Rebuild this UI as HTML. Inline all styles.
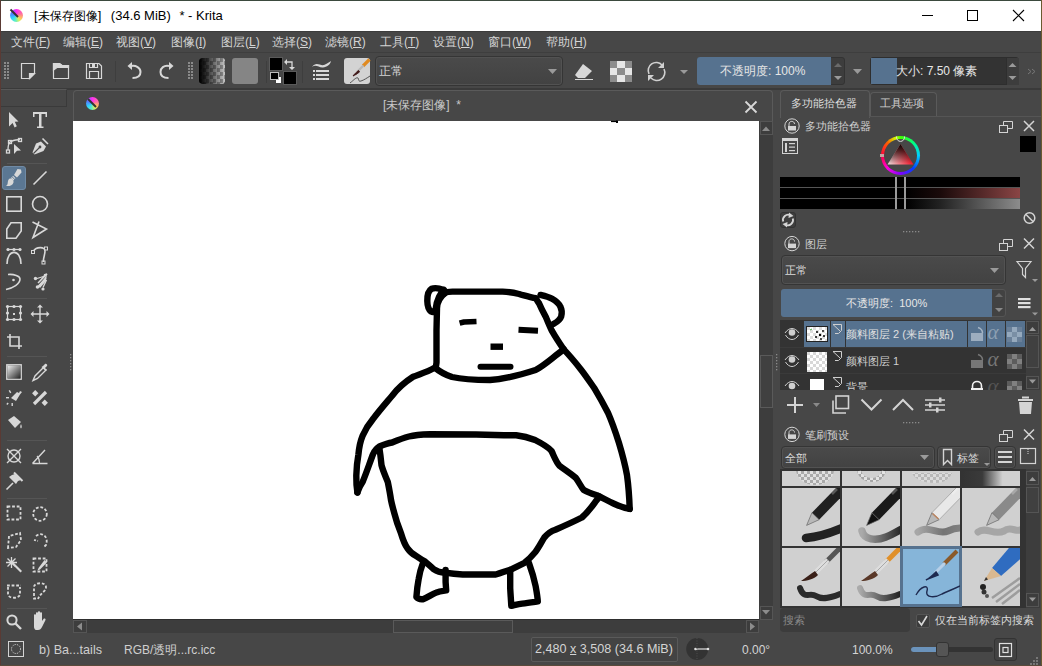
<!DOCTYPE html>
<html><head><meta charset="utf-8">
<style>
*{margin:0;padding:0;box-sizing:border-box}
html,body{width:1042px;height:666px;overflow:hidden}
body{position:relative;background:#474747;font-family:"Liberation Sans",sans-serif;font-size:12px;color:#d4d4d4}
.a{position:absolute}
.t{position:absolute;white-space:nowrap;line-height:14px}
svg{position:absolute;left:0;top:0;overflow:visible}
</style></head><body>
<!-- desktop border -->
<div class="a" style="left:0;top:0;width:1042px;height:1px;background:#3b4a3e"></div>
<div class="a" style="left:0;top:0;width:1px;height:666px;background:#5a3a34"></div>
<div class="a" style="left:1041px;top:0;width:1px;height:666px;background:#6a5a30"></div>
<div class="a" style="left:0;top:665px;width:1042px;height:1px;background:#5a4a3a"></div>
<!-- title bar -->
<div class="a" style="left:1px;top:1px;width:1040px;height:30px;background:#fff"></div>
<div class="t" style="left:34px;top:8px;font-size:13px;color:#000;line-height:15px">[<span style="font-size:12.2px">未保存图像</span>]&nbsp;<span style="display:inline-block;width:6px"></span>(34.6 MiB)&nbsp;<span style="display:inline-block;width:5px"></span>* - Krita</div>
<div class="a" style="left:10px;top:9px;width:13px;height:13px;border-radius:50%;background:conic-gradient(#ff30f0 0deg,#ff70a0 70deg,#ffc060 120deg,#e0f060 150deg,#60f0c0 190deg,#30d0ff 240deg,#5080ff 290deg,#c040ff 330deg,#ff30f0 360deg)"></div>
<svg width="1042" height="666">
<line x1="922" y1="15.5" x2="933" y2="15.5" stroke="#000" stroke-width="1"/>
<rect x="967.5" y="10.5" width="10" height="10" fill="none" stroke="#000" stroke-width="1"/>
<path d="M1013 10 L1024 21 M1024 10 L1013 21" stroke="#000" stroke-width="1.1"/>
<path d="M10.5 9.5 L18 17" stroke="#333" stroke-width="2"/>
</svg>
<!-- menu bar -->
<div class="a" style="left:1px;top:31px;width:1040px;height:1px;background:#3c3c3c"></div>
<div class="a" style="left:1px;top:52px;width:1040px;height:1px;background:#3e3e3e"></div>
<!-- menu -->
<div class="t" style="left:11px;top:35px">文件(<u>F</u>)</div>
<div class="t" style="left:63px;top:35px">编辑(<u>E</u>)</div>
<div class="t" style="left:116px;top:35px">视图(<u>V</u>)</div>
<div class="t" style="left:171px;top:35px">图像(<u>I</u>)</div>
<div class="t" style="left:221px;top:35px">图层(<u>L</u>)</div>
<div class="t" style="left:272px;top:35px">选择(<u>S</u>)</div>
<div class="t" style="left:325px;top:35px">滤镜(<u>R</u>)</div>
<div class="t" style="left:380px;top:35px">工具(<u>T</u>)</div>
<div class="t" style="left:433px;top:35px">设置(<u>N</u>)</div>
<div class="t" style="left:488px;top:35px">窗口(<u>W</u>)</div>
<div class="t" style="left:546px;top:35px">帮助(<u>H</u>)</div>
<!-- toolbar -->
<div class="a" style="left:1px;top:88px;width:1040px;height:2px;background:#3a3a3a"></div>
<!-- gradient swatch -->
<div class="a" style="left:199px;top:58px;width:26px;height:26px;border-radius:3px;overflow:hidden;background:repeating-conic-gradient(#c4c4c4 0 25%,#8c8c8c 0 50%) 0 0/7px 7px">
 <div class="a" style="left:0;top:0;width:26px;height:26px;background:linear-gradient(90deg,#000 0%,rgba(0,0,0,.85) 20%,rgba(0,0,0,0) 100%)"></div>
</div>
<!-- pattern swatch -->
<div class="a" style="left:232px;top:58px;width:26px;height:26px;border-radius:3px;background:#858585"></div>
<!-- fg/bg -->
<div class="a" style="left:269px;top:57px;width:14px;height:14px;background:#000;border:1px solid #5a5a5a"></div>
<div class="a" style="left:283px;top:71px;width:14px;height:14px;background:#000;border:1px solid #5a5a5a"></div>
<div class="a" style="left:275px;top:76px;width:7px;height:8px;background:#fff;border:1px solid #444"></div>
<div class="a" style="left:270px;top:72px;width:9px;height:8px;background:#000;border:1px solid #bbb"></div>
<div class="a" style="left:266px;top:61px;width:1px;height:22px;background:#3e3e3e"></div>
<div class="a" style="left:302px;top:61px;width:1px;height:22px;background:#3e3e3e"></div>
<div class="a" style="left:115px;top:61px;width:1px;height:21px;background:#3e3e3e"></div>
<!-- brush preset thumb -->
<div class="a" style="left:344px;top:58px;width:26px;height:26px;border-radius:3px;background:#d3d3d3"></div>
<!-- blend combo -->
<div class="a" style="left:375px;top:56px;width:188px;height:30px;border-radius:4px;border:1px solid #353535;background:linear-gradient(#4a4a4a,#424242);box-shadow:inset 0 0 0 1px #525252"></div>
<div class="t" style="left:379px;top:64px">正常</div>
<!-- opacity slider -->
<div class="a" style="left:697px;top:57px;width:148px;height:28px;border-radius:3px;background:#3d3d3d;border:1px solid #333"></div>
<div class="a" style="left:697px;top:57px;width:134px;height:28px;border-radius:3px 0 0 3px;background:#56728f"></div>
<div class="t" style="left:720px;top:64px;color:#e6e6e6">不透明度: 100%</div>
<!-- size slider -->
<div class="a" style="left:870px;top:57px;width:149px;height:28px;border-radius:3px;background:#333;border:1px solid #2e2e2e"></div>
<div class="a" style="left:871px;top:58px;width:26px;height:26px;background:#56728f"></div>
<div class="a" style="left:1006px;top:58px;width:13px;height:27px;background:#3d3d3d;border-left:1px solid #2e2e2e"></div>
<div class="t" style="left:896px;top:64px;color:#e6e6e6">大小: 7.50 像素</div>
<svg width="1042" height="666">
<g fill="#8a8a8a">
<rect x="4" y="62" width="2" height="2"/><rect x="7" y="62" width="2" height="2"/>
<rect x="4" y="65" width="2" height="2"/><rect x="7" y="65" width="2" height="2"/>
<rect x="4" y="68" width="2" height="2"/><rect x="7" y="68" width="2" height="2"/>
<rect x="4" y="71" width="2" height="2"/><rect x="7" y="71" width="2" height="2"/>
<rect x="4" y="74" width="2" height="2"/><rect x="7" y="74" width="2" height="2"/>
<rect x="4" y="77" width="2" height="2"/><rect x="7" y="77" width="2" height="2"/>
<rect x="188" y="62" width="2" height="2"/><rect x="191" y="62" width="2" height="2"/>
<rect x="188" y="65" width="2" height="2"/><rect x="191" y="65" width="2" height="2"/>
<rect x="188" y="68" width="2" height="2"/><rect x="191" y="68" width="2" height="2"/>
<rect x="188" y="71" width="2" height="2"/><rect x="191" y="71" width="2" height="2"/>
<rect x="188" y="74" width="2" height="2"/><rect x="191" y="74" width="2" height="2"/>
<rect x="188" y="77" width="2" height="2"/><rect x="191" y="77" width="2" height="2"/>
</g>
<g fill="none" stroke="#d8d8d8" stroke-width="1.2">
<!-- new doc -->
<path d="M21.5 63.5 H34.5 V73.5 L29.5 78.5 H21.5 Z"/>
<path d="M34.5 73.5 H29.5 V78.5 Z" fill="#d8d8d8"/>
<!-- open -->
<path d="M53.5 63.5 H59.5 L62 65.5 H68.5 V78.5 H53.5 Z"/>
<path d="M53.5 63.5 H59.5 L62 65.5 H68.5 V67.5 H57 L53.5 70 Z" fill="#d8d8d8"/>
<!-- save -->
<path d="M86.5 63.5 H99 L101.5 66 V78.5 H86.5 Z"/>
<path d="M89.5 63.5 V67.5 H97.5 V63.5 M89.5 78.5 V71.5 H98.5 V78.5"/>
</g>
<rect x="92" y="64" width="3" height="3" fill="#d8d8d8"/>
<g fill="none" stroke="#d8d8d8" stroke-width="2">
<path d="M131 66 C136 65 140.5 68 140.5 72 C140.5 76 137 78 132.5 78"/>
<path d="M162 66 C157 65 162.5 68 162.5 72" stroke="none"/>
<path d="M169 66 C164 65 160.5 68 160.5 72 C160.5 76 164 78 168.5 78"/>
</g>
<path d="M127.5 66 L132 62 L132 70 Z" fill="#d8d8d8"/>
<path d="M173.5 66 L169 62 L169 70 Z" fill="#d8d8d8"/>
<!-- swap arrows -->
<g fill="none" stroke="#d8d8d8" stroke-width="1.3">
<path d="M286 62 H292 V67"/>
</g>
<path d="M284 62 L287 59 L287 65 Z M292 70 L289 67 L295 67 Z" fill="#d8d8d8"/>
<!-- preset editor icon -->
<path d="M312 67 C316 61 320 66 324 65 C327 64 329 62 331 61 C330 65 327 67 323 67.5 C319 68 316 64 312 67 Z" fill="#d8d8d8"/>
<g fill="#d8d8d8">
<rect x="313" y="70" width="2" height="2"/><rect x="316" y="70" width="13" height="2"/>
<rect x="313" y="74" width="2" height="2"/><rect x="316" y="74" width="13" height="2"/>
<rect x="313" y="78" width="2" height="2"/><rect x="316" y="78" width="13" height="2"/>
</g>
<!-- brush thumb -->
<path d="M369.5 59.5 L363 66" stroke="#e08a20" stroke-width="3.2"/>
<path d="M363.5 65.5 L357.5 71.5" stroke="#b8b8b8" stroke-width="2.4"/>
<path d="M358.5 70.5 C356 72.5 354.5 74 353 76 C355 75 357 74 359.5 72 Z" fill="#401818" stroke="#401818" stroke-width="1"/>
<path d="M350 83 C354 80 356 77 358 78 C359 79 358 82 361 81 C364 80 367 78 370 76" fill="none" stroke="#444" stroke-width="0.9"/>
<!-- combo arrow -->
<path d="M548 69 H557 L552.5 74 Z" fill="#9a9a9a"/>
<!-- eraser -->
<path d="M583 64 L592 71 L585 78 L578 78 L575 75 Z" fill="#d8d8d8"/>
<path d="M575 79.5 H593" stroke="#d8d8d8" stroke-width="1"/>
<!-- checker -->
<g>
<rect x="610" y="61" width="21" height="21" fill="#8c8c8c"/>
<rect x="617" y="61" width="8" height="7" fill="#e6e6e6"/>
<rect x="610" y="68" width="7" height="7" fill="#e6e6e6"/>
<rect x="625" y="68" width="7" height="7" fill="#e6e6e6"/>
<rect x="617" y="75" width="8" height="7" fill="#e6e6e6"/>
<rect x="610" y="61" width="7" height="7" fill="#8c8c8c"/>
<rect x="625" y="61" width="7" height="7" fill="#8c8c8c"/>
<rect x="610" y="75" width="7" height="7" fill="#8c8c8c"/>
<rect x="625" y="75" width="7" height="7" fill="#8c8c8c"/>
</g>
<!-- reload -->
<g fill="none" stroke="#d0d0d0" stroke-width="1.6">
<path d="M649 74 A8 8 0 0 1 662 65"/>
<path d="M664 69 A8 8 0 0 1 651 78"/>
</g>
<path d="M664 62 L664 68 L658 68 Z M648 81 L648 75 L654 75 Z" fill="#d0d0d0"/>
<path d="M680 70 H688 L684 74 Z" fill="#9a9a9a"/>
<!-- opacity spin arrows -->
<path d="M834 67 H842 L838 63 Z" fill="#6a6a6a"/>
<path d="M834 76 H842 L838 80 Z" fill="#9a9a9a"/>
<path d="M853 69 H862 L857.5 74 Z" fill="#9a9a9a"/>
<path d="M1008.5 67 H1016.5 L1012.5 63 Z" fill="#9a9a9a"/>
<path d="M1008.5 76 H1016.5 L1012.5 80 Z" fill="#9a9a9a"/>
<path d="M1028 69 L1031 71.5 L1028 74 M1032 69 L1035 71.5 L1032 74" fill="none" stroke="#777" stroke-width="1"/>
</svg>
<!-- toolbox header -->
<div class="a" style="left:1px;top:89px;width:66px;height:18px;border:1px solid #3a3a3a;border-top-color:#575757;border-left:none"></div>
<!-- selected tool bg -->
<div class="a" style="left:2px;top:166px;width:24px;height:24px;border-radius:3px;background:#5b7793;border:1px solid #6f8aa5"></div>
<div class="a" style="left:7px;top:163px;width:40px;height:1px;background:#555"></div>
<div class="a" style="left:7px;top:298px;width:40px;height:1px;background:#555"></div>
<div class="a" style="left:7px;top:356px;width:40px;height:1px;background:#555"></div>
<div class="a" style="left:7px;top:440px;width:40px;height:1px;background:#555"></div>
<div class="a" style="left:7px;top:498px;width:40px;height:1px;background:#555"></div>
<div class="a" style="left:7px;top:608px;width:40px;height:1px;background:#555"></div>
<svg width="1042" height="666">
<g fill="#d8d8d8" stroke="none">
<!-- select arrow -->
<path d="M9 112 L18.5 121.5 L14.8 121.8 L16.8 126.2 L14.6 127.5 L12.6 123 L9 126.5 Z"/>
<!-- T -->
<path d="M33 112 H47 V117 H45.5 V114 H41.5 V126.5 H43.5 V128 H37 V126.5 H39 V114 H34.5 V117 H33 Z"/>
<!-- shape select arrow -->
<path d="M14 144 L21 150.5 L17 150.8 L14 154 Z"/>
<!-- pen -->
<path d="M41 141.5 L46 146.5 L43.5 151 L34.5 154.5 L32.5 152.5 L36 143.5 Z"/><path d="M42.5 138.5 L48 144" stroke="#d8d8d8" stroke-width="1.6"/><path d="M33.5 153.5 L39.5 147.5" stroke="#474747" stroke-width="1.1"/><circle cx="40" cy="147" r="1.4" fill="#474747"/>
<!-- brush -->
<path d="M17.5 169 L21 169.5 L21.5 172.5 L17 177.5 L14 175 Z"/>
<path d="M13 175.8 L15.5 178.3 L14.8 179 L12.3 176.5 Z M11.8 177 L14.3 179.5 L13.5 180.5 L11 178 Z"/>
<path d="M10 178.5 C12 178 14 180 13.5 182.5 C12.5 185.5 9.5 186.5 6 186 C8 185 7.5 183 8 181 C8.5 179.5 9 178.8 10 178.5 Z"/>
</g>
<g fill="none" stroke="#d8d8d8" stroke-width="1.3">
<!-- shape tool nodes -->
<path d="M8 150 C8 146 9 143 10 142 C13 140 16 140 20 139.6"/>
<rect x="6.5" y="150" width="3" height="3"/><rect x="8.5" y="140.5" width="3" height="3"/><rect x="18.5" y="138.5" width="3" height="3"/>
<!-- line -->
<path d="M33.5 184.5 L46.5 171.5" stroke-width="1.6"/>
<!-- rect & ellipse -->
<rect x="6.8" y="196.8" width="14.4" height="14.4" stroke-width="1.6"/>
<circle cx="40" cy="204" r="7.5" stroke-width="1.6"/>
<!-- polygon -->
<path d="M6.8 229 L11 222.8 H21.2 V231 L16 238.2 H6.8 Z" stroke-width="1.6"/>
<!-- polyline -->
<path d="M32.5 222 L46.5 229 L33 237.5 L39 221.5" stroke-width="1.6"/>
<!-- bezier -->
<path d="M7 264 C7 248.5 21 248.5 21 264" stroke-width="1.6"/>
<path d="M7 249.5 H21" stroke-width="1.2"/>
<!-- path -->
<path d="M33.5 251 C36 247 45 246 45 251 C45 255 43 258 43.5 262" stroke-width="1.6"/>
<rect x="31.5" y="250.5" width="3" height="3" stroke-width="1"/><rect x="44.5" y="247" width="3" height="3" stroke-width="1"/><rect x="42" y="261" width="3" height="3" stroke-width="1"/>
<!-- freehand path -->
<path d="M8 274.5 C14 274 20 276 20 279 C20 284 13 288 6 289.5" stroke-width="1.6"/>
</g>
<g fill="#d8d8d8">
<circle cx="8" cy="249.5" r="1.6"/><circle cx="14" cy="249.5" r="1.6"/><circle cx="20" cy="249.5" r="1.6"/>
<circle cx="13.5" cy="280" r="1.3"/>
<!-- multibrush -->
<path d="M47 274 L46 281 L40 288 L38 286 L44 279 Z"/>
<path d="M44 275 L47 274 L38 283" stroke="#d8d8d8" stroke-width="1.5"/>
<circle cx="35.5" cy="278.5" r="1.7"/><circle cx="37.5" cy="287" r="1.8"/><circle cx="43" cy="289" r="1.6"/>
<path d="M37 278.5 L45 276 M38.5 286 L46 278 M43 287.5 L46.5 280" stroke="#d8d8d8" stroke-width="1.3"/>
</g>
<g fill="none" stroke="#d8d8d8" stroke-width="1.4">
<!-- transform -->
<rect x="7.5" y="306.5" width="13" height="13" stroke-width="1.2"/><g fill="#d8d8d8" stroke="none"><circle cx="7.5" cy="306.5" r="1.6"/><circle cx="14" cy="306.5" r="1.6"/><circle cx="20.5" cy="306.5" r="1.6"/><circle cx="7.5" cy="313" r="1.6"/><circle cx="20.5" cy="313" r="1.6"/><circle cx="7.5" cy="319.5" r="1.6"/><circle cx="14" cy="319.5" r="1.6"/><circle cx="20.5" cy="319.5" r="1.6"/></g>
<!-- move -->
<path d="M40 306 V322 M32 314 H48"/>
<!-- crop -->
<path d="M10 334 V346 H22 M7 337 H19 V349" stroke-width="1.6"/>
<!-- gradient tool -->
<rect x="6.8" y="364.8" width="14.4" height="14.4"/>
<!-- eyedropper -->
<path d="M44 367 L35 376 L33 380.5 L37.5 378.5 L46.5 369.5" />
<!-- smart patch -->
<!-- fill -->
<!-- assistant -->
<path d="M32.5 463.5 H47.5 M32.5 463.5 L45 450" /><path d="M39.5 463 C39.5 460 38.5 457.5 37 456" stroke-width="1.1"/>
<!-- selections -->
<rect x="7.5" y="506.5" width="13" height="13" stroke-dasharray="2.8 1.8" stroke-width="1.8"/>
<circle cx="40" cy="514" r="6.8" stroke-dasharray="2.8 1.8" stroke-width="1.8"/>
<path d="M8 548 L9 536 L20 533 L21 540 L16 547 Z" stroke-dasharray="2.8 1.8" stroke-width="1.8"/>
<path d="M36 536 C42 531 49 537 46 545 C45 546 44 547 43 547" stroke-dasharray="2.8 1.8" stroke-width="1.8"/>
<path d="M34 540 L38 541" stroke-dasharray="2 1.5" stroke-width="1.8"/>
<rect x="33.5" y="558.5" width="13" height="13" stroke-dasharray="2.8 1.8" stroke-width="1.8"/>
<path d="M8 587 V594 C8 599 20 599 20 594 V587" stroke-dasharray="2.8 1.8" stroke-width="1.8"/>
<path d="M7 585.5 H21" stroke-dasharray="2.8 1.8" stroke-width="1.8"/>
<path d="M36 598.5 H34 V587 C34 582 46 582 46 587 C46 592 41 592 38 599" stroke-dasharray="2.8 1.8" stroke-width="1.8"/>
<!-- zoom -->
<circle cx="12" cy="620" r="4.6" stroke-width="2"/>
<path d="M15.5 623.5 L21 629" stroke-width="2.4"/>
<!-- shapes: contour -->
<circle cx="14" cy="456" r="6" />
<path d="M7 449 L21 463 M21 449 L7 463" />
</g>
<g fill="#d8d8d8">
<rect x="13" y="313" width="2" height="2"/>
<path d="M40 304.5 L43 307.5 H37 Z M40 323.5 L43 320.5 H37 Z M30.5 314 L33.5 311 V317 Z M49.5 314 L46.5 311 V317 Z"/>
<rect x="7.5" y="365.5" width="13" height="13" fill="url(#grd)"/>
<path d="M43 366 L45 364 C46 363 48 365 47 366 L45 368 L47 370 L45.5 371 L41.5 367 Z"/>
<!-- smart patch -->
<path d="M11 398 L17 392 L19 393 L20 391 L22 392 L20 394.5 L16 401 Z"/>
<rect x="6" y="397" width="3" height="1.4"/><rect x="11.5" y="403" width="1.4" height="3"/><rect x="6.5" y="403" width="2" height="1.4" transform="rotate(-45 7.5 403.7)"/><rect x="9" y="390" width="1.4" height="3" transform="rotate(-30 10 391)"/>
<rect x="33" y="391" width="4.5" height="4.5" transform="rotate(45 35.25 393.25)"/><rect x="42.5" y="400.5" width="4.5" height="4.5" transform="rotate(45 44.75 402.75)"/><path d="M34 404 L46 392" stroke="#d8d8d8" stroke-width="3.2"/>
<!-- fill -->
<path d="M8 420 L14 416 L21 422 L15 428 Z"/>
<path d="M21 424 C22 426 22 428 21 428.5 C20 428 20 426 21 424 Z"/>
<!-- assistant pin -->
<path d="M15 474 L21 480 L18 481 L16 484 L9 477 L12 475 Z"/><path d="M14 472.5 L22.5 481" stroke="#d8d8d8" stroke-width="2"/><path d="M6.5 489.5 L13 483" stroke="#d8d8d8" stroke-width="1.6"/>
<!-- magic wand -->
<path d="M12.5 561.5 L22 571 L20.5 572.5 L11 563 Z"/>
<path d="M9 557 V568 M3.5 562.5 H14.5 M5 558.5 L13 566.5 M13 558.5 L5 566.5" stroke="#d8d8d8" stroke-width="1.3" transform="translate(2.5 0)"/>
<!-- similar selection dropper -->
<path d="M44.5 560 L47 562.5 L40 569.5 L37.5 570.5 L38.5 568 Z"/>
<!-- hand -->
<path d="M34 621 V615 C34 614 36 614 36 615 V619 V613 C36 612 38 612 38 613 V619 V612 C38 611 40 611 40 612 V619 V613 C40 612 42 612 42 613 V621 L43.5 619 C44.5 618 46 619 45.5 620 L42 627 C41 629 40 630 38 630 H36 C35 630 34 628.5 34 627 Z"/>
</g>
<defs><linearGradient id="grd" x1="0" y1="0" x2="1" y2="1"><stop offset="0" stop-color="#f0f0f0"/><stop offset="1" stop-color="#222"/></linearGradient></defs>
<g fill="#8a8a8a"><rect x="70" y="354" width="1.3" height="1.3"/><rect x="70" y="357" width="1.3" height="1.3"/><rect x="70" y="360" width="1.3" height="1.3"/><rect x="70" y="363" width="1.3" height="1.3"/><rect x="70" y="366" width="1.3" height="1.3"/><rect x="70" y="369" width="1.3" height="1.3"/></g>
</svg>
<!-- document subwindow -->
<div class="a" style="left:73px;top:90px;width:700px;height:32px;border:1px solid #5a5a5a;border-bottom:none;border-radius:4px 4px 0 0;background:#474747"></div>
<div class="t" style="left:383px;top:98px;color:#c8c8c8">[未保存图像]&nbsp; *</div>
<div class="a" style="left:86px;top:97px;width:13px;height:13px;border-radius:50%;background:conic-gradient(#ff30f0 0deg,#ff70a0 70deg,#ffc060 120deg,#e0f060 150deg,#60f0c0 190deg,#30d0ff 240deg,#5080ff 290deg,#c040ff 330deg,#ff30f0 360deg)"></div>
<div class="a" style="left:73px;top:121px;width:686px;height:499px;background:#fff;border-bottom:1px solid #2e2e2e"></div>
<!-- v scrollbar -->
<div class="a" style="left:759px;top:121px;width:14px;height:499px;background:#3d3d3d"></div>
<div class="a" style="left:760px;top:121px;width:13px;height:14px;border:1px solid #555"></div>
<div class="a" style="left:760px;top:606px;width:13px;height:14px;border:1px solid #555"></div>
<div class="a" style="left:760px;top:355px;width:13px;height:53px;border:1px solid #5a5a5a;background:#404040"></div>
<!-- h scrollbar -->
<div class="a" style="left:73px;top:620px;width:686px;height:13px;background:#3d3d3d"></div>
<div class="a" style="left:73px;top:620px;width:14px;height:13px;border:1px solid #555"></div>
<div class="a" style="left:746px;top:620px;width:13px;height:13px;border:1px solid #555"></div>
<div class="a" style="left:393px;top:620px;width:120px;height:13px;border:1px solid #5a5a5a;background:#404040"></div>
<svg width="1042" height="666">
<path d="M745.5 101.5 L756.5 112.5 M756.5 101.5 L745.5 112.5" stroke="#d8d8d8" stroke-width="1.8"/>
<path d="M88 99 L96 107" stroke="#333" stroke-width="2"/>
<path d="M762 131 H770 L766 126.5 Z" fill="#8c8c8c"/>
<path d="M762 610 H770 L766 614.5 Z" fill="#8c8c8c"/>
<path d="M82 622.5 V630.5 L77 626.5 Z" fill="#8c8c8c"/>
<path d="M750 622.5 V630.5 L755 626.5 Z" fill="#8c8c8c"/>
<g fill="none" stroke="#000" stroke-width="6.4" stroke-linecap="round" stroke-linejoin="round">
<!-- head -->
<path d="M444.8 293.2 C440 297 437.3 302 437 308 L436.5 330 L436.5 362.6 L435.7 368.3 C440 372 446 375 452 377 C465 380 478 380 490 380 C505 379 520 375 535.6 370 C545 365 552 358 563.7 349.4"/>
<path d="M444.8 293.2 C447 291.5 450 291.6 453 291.6 L502.6 291.6 C510 292 515 293 519.1 294 C525 296 531 297 535.6 298.2 C537 300 538 302 538.9 303.1 C541 308 543 312 545.5 316.3 C548 322 550 327 552.1 331.2 C556 338 560 344 563.7 349.4"/>
<!-- left ear -->
<path d="M443.9 289.9 C440 288.5 435 287.5 431.6 288.8 C428 291 427.2 296 427.3 301 C427.4 306 428 309.5 431 311.5 C433 312.5 434.5 312 435.5 310 C436 305 437 301 439 297 C440.5 294 442 291.5 443.9 289.9"/>
<!-- right ear -->
<path d="M540.5 294.9 C545 296 549 297 552.1 298.8 C556 301 559 303.5 560.4 306.8 C562 310 562 313.5 561.2 316.5 C560 320 557 322 553.8 323.8"/>
<!-- eyes nose mouth -->
<path d="M459.6 323.2 L464 322 L476.5 321.5" stroke-width="5.5" stroke-linecap="butt"/>
<path d="M518.5 329.8 L538 330.8" stroke-width="6" stroke-linecap="butt"/>
<path d="M490.5 346.7 L503 346.7" stroke-width="6.4" stroke-linecap="butt"/>
<path d="M480.5 366.8 L510.5 366.8" stroke-width="6"/>
<!-- left body -->
<path d="M434.1 368 C427 372 420 374 413.1 376.8 C405 382 398 388 392.1 395.7 C386 403 379 411 373.1 418.9 C368 425 365 430 362.6 435.7 C360 442 359 448 358.4 454.6 C357 462 356.5 468 356.3 475.6 C356.2 482 356.5 487 357.4 492.5"/>
<path d="M357.4 492.5 C359 488 360.5 485 362.6 482 C366 474 370 462 373.1 454 C375 450 377 448 379.4 446.5 C384 444.5 388 443 392.1 442.5 C398 440 403 438 408.9 436.5 C415 435 422 434.5 429.9 434.2 L476.2 434.5 C486 434.7 495 435 504 435.2 C510 435.2 513 435.2 516.2 435.2 C523 436 530 438 535.1 440 C543 444 548 447 551.4 450.8 C554 456 556 462 559.5 465.7 C565 470 570 473 575.7 477.8 C579 482 581 487 583.8 490 C588 492.5 593 494 597.3 495.4 C603 498 608 501 613.5 503.5 C619 506 624 508 629.7 508.9"/>
<!-- inner left body line -->
<path d="M379.4 448.3 C380.5 455 381 460 381.5 465.1 C383 471 385.5 476 387.8 482 C389 488 390 493 391 500 C392 505 393 508 394.3 513.1 C396 520 398.5 527 400.9 533 C403 540 405 545 407.5 548.4 C410 552 413 554.5 416.4 556.2 C419 558 422 560 425.2 561.7 C428 564 431 567 434 569.4 C437 571.5 441 572.5 445.1 572.7 C450 573.5 456 574.2 462.7 574.5 L495.8 574.5 C501 573 506 571 511.3 569.4 C516 567 520 565 524.5 562.8 C528 560 532 556 535.6 551.7 C539 547 541.5 542 544.4 537.4 C548 533 551 531 555.4 529.7 C564 526 573 522 581.9 517.5 C587 513 591 508 595.2 502.1 L599.6 496.6"/>
<!-- right body -->
<path d="M563.7 349.4 C570 356 575 362 581.1 369.7 C586 376 590 382 594.6 388.6 C599 396 603.5 404 608.1 413 C612 422 615.5 432 618.9 442.7 C622 453 625 464 627 475.1 C628.5 486 629.3 497 629.7 508.9"/>
<!-- legs -->
<path d="M423 562.8 C421 568 419.5 573 418.6 579.3 C417.5 585 416.8 591 416.4 597 C418 599 420 599.5 423 599.2 C427.5 597.5 431.5 594.5 436.2 592.6 C439.5 591 443 590.8 446.2 590.4 L445.6 582 L445.6 570"/>
<path d="M510.2 570.5 L510.2 588.2 C510.5 594 511 600 511.3 605.8 C515 605 518.5 604 522.3 603.6 C527.5 603 532.5 602.2 537.8 601.4 C537.5 596 536.5 591 535.6 586 C534 578 531.5 570 528.9 562.8"/>
</g>
<rect x="611" y="120.8" width="6" height="1.3" fill="#000"/><rect x="616" y="120.5" width="2" height="2.5" fill="#000"/>
</svg>
<!-- docker tabs -->
<div class="a" style="left:780px;top:90px;width:90px;height:28px;border:1px solid #5a5a5a;border-bottom:none;border-radius:4px 4px 0 0;background:#474747"></div>
<div class="a" style="left:870px;top:92px;width:67px;height:25px;border:1px solid #5a5a5a;border-bottom:none;border-radius:4px 4px 0 0;background:#434343"></div>
<div class="a" style="left:869px;top:116px;width:172px;height:1px;background:#555"></div>
<div class="t" style="left:791px;top:96px;font-size:11px;color:#dcdcdc">多功能拾色器</div>
<div class="t" style="left:880px;top:96px;font-size:11px;color:#cfcfcf">工具选项</div>
<!-- color selector docker -->
<div class="t" style="left:805px;top:119px;font-size:11px;color:#d0d0d0">多功能拾色器</div>
<div class="a" style="left:1020px;top:136px;width:16px;height:16px;background:#000"></div>
<div class="a" style="left:880.5px;top:135.5px;width:39px;height:39px;border-radius:50%;background:conic-gradient(#40ff00 0deg,#00ff80 45deg,#00d0ff 90deg,#0040ff 135deg,#8000ff 180deg,#ff00e0 225deg,#ff0040 270deg,#ff6000 315deg,#d0ff00 345deg,#40ff00 360deg)"></div>
<div class="a" style="left:883.5px;top:138.5px;width:33px;height:33px;border-radius:50%;background:#474747"></div>
<div class="a" style="left:780px;top:177px;width:240px;height:32px;background:#000"></div>
<div class="a" style="left:906px;top:188px;width:114px;height:10px;background:linear-gradient(90deg,#000,#1a0a0a 30%,#8a4545)"></div>
<div class="a" style="left:906px;top:199px;width:114px;height:10px;background:linear-gradient(90deg,#000,#222 30%,#8c8c8c)"></div>
<div class="a" style="left:780px;top:187px;width:240px;height:1px;background:#555"></div>
<div class="a" style="left:780px;top:198px;width:240px;height:1px;background:#555"></div>
<div class="a" style="left:895px;top:177px;width:2px;height:32px;background:#9a9a9a"></div>
<div class="a" style="left:904px;top:177px;width:2px;height:32px;background:#9a9a9a"></div>
<div class="a" style="left:780px;top:212px;width:16px;height:16px;border-radius:3px;background:#3e3e3e;border:1px solid #333"></div>
<svg width="1042" height="666">
<defs>
<linearGradient id="tri1" x1="0" y1="0" x2="1" y2="0"><stop offset="0" stop-color="#f4e4e4"/><stop offset="1" stop-color="#ff1025"/></linearGradient>
<linearGradient id="tri2" x1="0" y1="0" x2="0" y2="1"><stop offset="0" stop-color="#000" stop-opacity="1"/><stop offset="0.35" stop-color="#200000" stop-opacity="0.75"/><stop offset="1" stop-color="#000" stop-opacity="0"/></linearGradient>
</defs>
<path d="M900.5 144 L913.5 164.5 L887.5 164.5 Z" fill="url(#tri1)"/>
<path d="M900.5 144 L913.5 164.5 L887.5 164.5 Z" fill="url(#tri2)"/>
<path d="M896.5 136.5 C896 143 905 143 904.5 136.5" fill="none" stroke="#ddd" stroke-width="1"/>
<rect x="880" y="154" width="4" height="3" fill="#c8a0a0"/>
<g fill="none" stroke="#d4d4d4" stroke-width="1">
<circle cx="792" cy="126" r="7.2"/>
<circle cx="792" cy="243.6" r="7.2"/>
<circle cx="792" cy="434.4" r="7.2"/>
<path d="M789 126.5 V124 C789 120.5 794.5 120.5 794.5 124" />
<path d="M789 244 V241.5 C789 238 794.5 238 794.5 241.5" />
<path d="M789 435 V432.5 C789 429 794.5 429 794.5 432.5" />
<rect x="999.5" y="125.5" width="8" height="7"/><path d="M1003.5 125.5 V121.5 H1012.5 V128.5 H1007.5"/>
<rect x="999.5" y="243.5" width="8" height="7"/><path d="M1003.5 243.5 V239.5 H1012.5 V246.5 H1007.5"/>
<rect x="999.5" y="434.5" width="8" height="7"/><path d="M1003.5 434.5 V430.5 H1012.5 V437.5 H1007.5"/>
<path d="M1024 121 L1034 131 M1034 121 L1024 131" stroke-width="1.5"/>
<path d="M1024 238.5 L1034 248.5 M1034 238.5 L1024 248.5" stroke-width="1.5"/>
<path d="M1024 429.5 L1034 439.5 M1034 429.5 L1024 439.5" stroke-width="1.5"/>
<rect x="782.5" y="138.5" width="15" height="15"/>
<circle cx="1029.5" cy="218" r="5.3" stroke-width="1.5"/>
<path d="M1026 214.5 L1033 221.5" stroke-width="1.5"/>
<path d="M783.2 221.5 A5.2 5.2 0 0 1 790.5 215.3" stroke-width="1.8"/>
<path d="M792.8 218.5 A5.2 5.2 0 0 1 785.5 224.7" stroke-width="1.8"/>
</g>
<g fill="#d4d4d4">
<rect x="788" y="126" width="8" height="4.5"/>
<rect x="788" y="243.6" width="8" height="4.5"/>
<rect x="788" y="434.4" width="8" height="4.5"/>
<rect x="783" y="139" width="14" height="2"/>
<rect x="785" y="143" width="2" height="9"/>
<rect x="789" y="143" width="6" height="1.2"/><rect x="789" y="146.5" width="6" height="1.2"/><rect x="789" y="150" width="6" height="1.2"/>
<path d="M789 212.5 L793.5 216 L788.5 218 Z M787 227.5 L782.5 224 L787.5 222 Z"/>
</g>
<g fill="#8a8a8a">
<rect x="903" y="231" width="1.3" height="1.3"/><rect x="906" y="231" width="1.3" height="1.3"/><rect x="909" y="231" width="1.3" height="1.3"/><rect x="912" y="231" width="1.3" height="1.3"/><rect x="915" y="231" width="1.3" height="1.3"/><rect x="918" y="231" width="1.3" height="1.3"/>
<rect x="903" y="422" width="1.3" height="1.3"/><rect x="906" y="422" width="1.3" height="1.3"/><rect x="909" y="422" width="1.3" height="1.3"/><rect x="912" y="422" width="1.3" height="1.3"/><rect x="915" y="422" width="1.3" height="1.3"/><rect x="918" y="422" width="1.3" height="1.3"/>
<rect x="776" y="354" width="1.3" height="1.3"/><rect x="776" y="357" width="1.3" height="1.3"/><rect x="776" y="360" width="1.3" height="1.3"/><rect x="776" y="363" width="1.3" height="1.3"/><rect x="776" y="366" width="1.3" height="1.3"/><rect x="776" y="369" width="1.3" height="1.3"/>
</g>
</svg>
<!-- layers docker -->
<div class="t" style="left:805px;top:237px;font-size:11px;color:#d0d0d0">图层</div>
<div class="a" style="left:781px;top:255px;width:225px;height:30px;border-radius:4px;border:1px solid #353535;background:linear-gradient(#4a4a4a,#424242);box-shadow:inset 0 0 0 1px #525252"></div>
<div class="t" style="left:785px;top:263px;font-size:11px;color:#dcdcdc">正常</div>
<div class="a" style="left:781px;top:289px;width:225px;height:28px;border-radius:3px;background:#424242;border:1px solid #555"></div>
<div class="a" style="left:781px;top:289px;width:211px;height:28px;border-radius:3px 0 0 3px;background:#56728f"></div>
<div class="t" style="left:846px;top:296px;font-size:11px;color:#e6e6e6">不透明度:&nbsp; 100%</div>
<!-- layer list -->
<div class="a" style="left:780px;top:320px;width:246px;height:70px;background:#333"></div>
<div class="a" style="left:804px;top:321px;width:26px;height:26px;background:#56728f"></div>
<div class="a" style="left:831px;top:321px;width:14px;height:26px;background:#56728f"></div>
<div class="a" style="left:846px;top:321px;width:121px;height:26px;background:#56728f"></div>
<div class="a" style="left:968px;top:321px;width:18px;height:26px;background:#56728f"></div>
<div class="a" style="left:987px;top:321px;width:18px;height:26px;background:#56728f"></div>
<div class="a" style="left:1006px;top:321px;width:19px;height:26px;background:#56728f"></div>
<div class="a" style="left:780px;top:347px;width:246px;height:1px;background:#3a3a3a"></div>
<div class="a" style="left:780px;top:373px;width:246px;height:1px;background:#3a3a3a"></div>
<div class="a" style="left:806px;top:326px;width:22px;height:16px;border:1px solid #222;background:repeating-conic-gradient(#fff 0 25%,#ddd 0 50%) 0 0/6px 6px"></div>
<div class="a" style="left:807px;top:352px;width:20px;height:20px;background:repeating-conic-gradient(#fff 0 25%,#d8d8d8 0 50%) 0 0/6px 6px"></div>
<div class="a" style="left:810px;top:379px;width:14px;height:11px;background:#fff"></div>
<div class="t" style="left:846px;top:327px;font-size:11px;color:#e0e0e0">颜料图层 2 (来自粘贴)</div>
<div class="t" style="left:846px;top:354px;font-size:11px;color:#cfcfcf">颜料图层 1</div>
<div class="t" style="left:846px;top:380px;font-size:11px;color:#cfcfcf">背景</div>
<div class="a" style="left:780px;top:390px;width:246px;height:6px;background:#474747"></div>
<!-- layer scrollbar -->
<div class="a" style="left:1026px;top:320px;width:14px;height:70px;background:#3d3d3d"></div>
<div class="a" style="left:1026px;top:321px;width:13px;height:13px;border:1px solid #555"></div>
<div class="a" style="left:1026px;top:335px;width:13px;height:33px;border:1px solid #555;background:#404040"></div>
<div class="a" style="left:1026px;top:376px;width:13px;height:13px;border:1px solid #555"></div>
<svg width="1042" height="666">
<path d="M1029 331 H1036 L1032.5 327 Z" fill="#9a9a9a"/>
<path d="M1029 379.5 H1036 L1032.5 383.5 Z" fill="#9a9a9a"/>
<path d="M990 268 H999 L994.5 273 Z" fill="#9a9a9a"/>
<path d="M995 297 H1003 L999 293 Z" fill="#6a6a6a"/>
<path d="M995 308 H1003 L999 312 Z" fill="#8a8a8a"/>
<!-- filter icon -->
<path d="M1017 261.5 H1031 L1025.5 268.5 V277.5 L1022.5 274.5 V268.5 Z" fill="none" stroke="#d4d4d4" stroke-width="1.2"/>
<path d="M1032 279 H1038 L1035 282 Z" fill="#9a9a9a"/>
<g fill="#e0e0e0"><rect x="1018" y="298" width="12.5" height="2.2"/><rect x="1018" y="302" width="12.5" height="2.2"/><rect x="1018" y="306" width="12.5" height="2.2"/></g>
<path d="M1032 312.5 H1038 L1035 315.5 Z" fill="#9a9a9a"/>
<!-- eyes -->
<g fill="none" stroke="#cfcfcf" stroke-width="1">
<path d="M785 333 C789 327 795 327 799 333" /><path d="M785.5 335 C789 341 795 341 798.5 335"/>
<path d="M785 360 C789 354 795 354 799 360" /><path d="M785.5 362 C789 368 795 368 798.5 362"/>
<path d="M785 386 C789 380 795 380 799 386" />
<path d="M833 324.5 H841.5 V330.5 L838.5 333.5 H835 M833 324.5 L840 331" />
<path d="M833 351.5 H841.5 V357.5 L838.5 360.5 H835 M833 351.5 L840 358" />
<path d="M833 377.5 H841.5 V383.5 L838.5 386.5 H835 M833 377.5 L840 384" />
</g>
<g fill="#cfcfcf"><circle cx="792" cy="332.5" r="3.3"/><circle cx="792" cy="359.5" r="3.3"/><circle cx="792" cy="386" r="3.3"/></g>
<!-- thumb dots -->
<g fill="#000"><circle cx="817" cy="332" r="1"/><circle cx="820" cy="335" r="1.2"/><circle cx="823" cy="331" r="0.9"/><circle cx="824" cy="336" r="1"/><circle cx="821" cy="339" r="0.9"/><circle cx="816" cy="337" r="1"/></g>
<path d="M810 330 L812 329" stroke="#4a4" stroke-width="1"/>
<!-- lock / alpha / inherit -->
<g fill="#a4b4c4" opacity="0.9"><rect x="971" y="333" width="12" height="8"/></g>
<path d="M978 327.5 C981 328.5 982.5 330.5 982.5 333" fill="none" stroke="#a4b4c4" stroke-width="1.5"/>
<rect x="971" y="360" width="12" height="8" fill="#777"/>
<path d="M978 354.5 C981 355.5 982.5 357.5 982.5 360" fill="none" stroke="#777" stroke-width="1.5"/>
<path d="M972.5 389 V386 C972.5 380 981.5 380 981.5 386 V389" fill="none" stroke="#f0f0f0" stroke-width="1.6"/>
<rect x="971" y="388" width="12" height="2" fill="#f0f0f0"/>
<text x="987.5" y="339" font-family="Liberation Serif" font-style="italic" font-size="21" fill="#8da0b3">α</text>
<text x="987.5" y="366" font-family="Liberation Serif" font-style="italic" font-size="21" fill="#777">α</text>
<text x="987.5" y="393" font-family="Liberation Serif" font-style="italic" font-size="21" fill="#555">α</text><rect x="985" y="390" width="22" height="6" fill="#474747"/>
<g>
<rect x="1007" y="327" width="15" height="15" fill="#7a8fa5"/>
<rect x="1012" y="327" width="5" height="5" fill="#95a9bd"/><rect x="1007" y="332" width="5" height="5" fill="#95a9bd"/><rect x="1017" y="332" width="5" height="5" fill="#95a9bd"/><rect x="1012" y="337" width="5" height="5" fill="#95a9bd"/>
<rect x="1007" y="327" width="5" height="5" fill="#6a8099"/><rect x="1017" y="327" width="5" height="5" fill="#6a8099"/><rect x="1007" y="337" width="5" height="5" fill="#6a8099"/><rect x="1017" y="337" width="5" height="5" fill="#6a8099"/>
<rect x="1007" y="354" width="15" height="15" fill="#5c5c5c"/>
<rect x="1012" y="354" width="5" height="5" fill="#808080"/><rect x="1007" y="359" width="5" height="5" fill="#808080"/><rect x="1017" y="359" width="5" height="5" fill="#808080"/><rect x="1012" y="364" width="5" height="5" fill="#808080"/>
<rect x="1007" y="381" width="15" height="9" fill="#5c5c5c"/>
<rect x="1012" y="381" width="5" height="5" fill="#808080"/><rect x="1007" y="386" width="5" height="4" fill="#808080"/><rect x="1017" y="386" width="5" height="4" fill="#808080"/>
</g>
<!-- bottom buttons -->
<g fill="none" stroke="#d4d4d4" stroke-width="2">
<path d="M795 397 V413 M787 405 H803"/>
<path d="M833 400.5 V413 H846" stroke-width="1.6"/>
<rect x="836" y="396" width="12.5" height="12.5" stroke-width="1.6"/>
<path d="M861.5 399.5 L871.5 409.5 L881.5 399.5"/>
<path d="M893 410 L903 400 L913 410"/>
<path d="M925 400 H945 M925 405 H945 M925 410 H945" stroke-width="1.5"/>
</g>
<g fill="#d4d4d4">
<path d="M813 403 H820 L816.5 407 Z" fill="#8a8a8a"/>
<rect x="939" y="397.5" width="2.5" height="5"/><rect x="929" y="402.5" width="2.5" height="5"/><rect x="936" y="407.5" width="2.5" height="5"/>
<path d="M1018 399 H1033 V401 H1018 Z M1022 396.5 H1029 V398.5 H1022 Z M1019 402 H1032 L1031 414 H1020 Z"/>
</g>
</svg>
<!-- brush presets docker -->
<div class="t" style="left:805px;top:428px;font-size:11px;color:#d0d0d0">笔刷预设</div>
<div class="a" style="left:781px;top:446px;width:154px;height:23px;border-radius:4px;border:1px solid #353535;background:linear-gradient(#4a4a4a,#424242);box-shadow:inset 0 0 0 1px #525252"></div>
<div class="t" style="left:785px;top:451px;font-size:11px;color:#dcdcdc">全部</div>
<div class="a" style="left:937px;top:446px;width:54px;height:23px;border-radius:4px;border:1px solid #353535;background:linear-gradient(#4a4a4a,#424242);box-shadow:inset 0 0 0 1px #525252"></div>
<div class="t" style="left:957px;top:451px;font-size:11px;color:#dcdcdc">标签</div>
<div class="a" style="left:994px;top:446px;width:22px;height:23px;border-radius:4px;border:1px solid #353535;background:linear-gradient(#4a4a4a,#424242);box-shadow:inset 0 0 0 1px #525252"></div>
<!-- grid -->
<div class="a" style="left:780px;top:469px;width:246px;height:139px;background:#333"></div>
<div id="cells" class="a" style="left:0;top:0">
<div class="a" style="left:782px;top:471px;width:58px;height:15px;background:#d0d0d0"></div>
<div class="a" style="left:842px;top:471px;width:58px;height:15px;background:#d0d0d0"></div>
<div class="a" style="left:902px;top:471px;width:58px;height:15px;background:#d0d0d0"></div>
<div class="a" style="left:962px;top:471px;width:58px;height:15px;background:linear-gradient(90deg,#333 0%,#3a3a3a 35%,#d0d0d0 70%)"></div>
<div class="a" style="left:782px;top:488px;width:58px;height:58px;background:#d0d0d0"></div>
<div class="a" style="left:842px;top:488px;width:58px;height:58px;background:#d0d0d0"></div>
<div class="a" style="left:902px;top:488px;width:58px;height:58px;background:#d0d0d0"></div>
<div class="a" style="left:962px;top:488px;width:58px;height:58px;background:#d0d0d0"></div>
<div class="a" style="left:782px;top:548px;width:58px;height:58px;background:#d0d0d0"></div>
<div class="a" style="left:842px;top:548px;width:58px;height:58px;background:#d0d0d0"></div>
<div class="a" style="left:900px;top:546px;width:62px;height:61px;background:#56728f"></div>
<div class="a" style="left:903px;top:549px;width:56px;height:55px;background:#86b5d9"></div>
<div class="a" style="left:962px;top:548px;width:58px;height:58px;background:#d0d0d0"></div>
</div>
<!-- brush scrollbar -->
<div class="a" style="left:1026px;top:469px;width:14px;height:139px;background:#3d3d3d"></div>
<div class="a" style="left:1026px;top:471px;width:13px;height:14px;border:1px solid #555"></div>
<div class="a" style="left:1026px;top:487px;width:13px;height:26px;border:1px solid #555;background:#404040"></div>
<div class="a" style="left:1026px;top:593px;width:13px;height:14px;border:1px solid #555"></div>
<!-- search -->
<div class="a" style="left:780px;top:608px;width:130px;height:24px;border-radius:4px;background:#3c3c3c"></div>
<div class="t" style="left:783px;top:613px;font-size:11px;color:#8a8a8a">搜索</div>
<div class="a" style="left:916px;top:614px;width:14px;height:14px;border-radius:2px;background:#3c3c3c;border:1px solid #555"></div>
<div class="t" style="left:935px;top:613px;font-size:11px;color:#dcdcdc">仅在当前标签内搜索</div>
<svg width="1042" height="666">
<path d="M1029 481 H1036 L1032.5 477 Z" fill="#9a9a9a"/>
<path d="M1029 597.5 H1036 L1032.5 601.5 Z" fill="#9a9a9a"/>
<path d="M920 455 H929 L924.5 460 Z" fill="#9a9a9a"/>
<path d="M943.5 449.5 H951.5 V464.5 L947.5 460.5 L943.5 464.5 Z" fill="none" stroke="#d4d4d4" stroke-width="1.4"/>
<path d="M984 463 H990 L987 466 Z" fill="#9a9a9a"/>
<g fill="#d4d4d4"><rect x="998" y="451" width="14" height="2"/><rect x="998" y="456" width="14" height="2"/><rect x="998" y="461" width="14" height="2"/></g>
<rect x="1020.5" y="448.5" width="15" height="15" fill="none" stroke="#d4d4d4" stroke-width="1.2"/>
<path d="M1028 449 V455" stroke="#d4d4d4" stroke-width="1" stroke-dasharray="1 1"/>
<path d="M918.5 621 L921.5 625 L927 616" fill="none" stroke="#d8d8d8" stroke-width="1.6"/>
<!-- checker arcs row0 -->
<defs>
<pattern id="chk" x="0" y="0" width="6" height="6" patternUnits="userSpaceOnUse"><rect width="6" height="6" fill="#e8e8e8"/><rect width="3" height="3" fill="#9a9a9a"/><rect x="3" y="3" width="3" height="3" fill="#9a9a9a"/></pattern>
<linearGradient id="gk" x1="0" x2="1"><stop offset="0" stop-color="#aaa"/><stop offset="1" stop-color="#222"/></linearGradient>
<linearGradient id="gk2" x1="0" x2="1"><stop offset="0" stop-color="#999"/><stop offset="0.6" stop-color="#555"/><stop offset="1" stop-color="#666"/></linearGradient>
<linearGradient id="pen" x1="0" y1="0" x2="1" y2="1"><stop offset="0" stop-color="#555"/><stop offset="1" stop-color="#111"/></linearGradient>
</defs>
<path d="M796 471 C798 480 806 485 815 485 C826 485 833 478 834 471 Z" fill="url(#chk)" opacity="0.7"/>
<path d="M859 471 C861 478 866 480 872 480 C878 480 882 477 884 471" fill="none" stroke="url(#chk)" stroke-width="4" opacity="0.8"/>
<path d="M912 473 C915 480 925 483 935 483 C945 483 950 478 952 473 Z" fill="url(#chk)" opacity="0.45"/>
<!-- row1 pens -->
<defs><clipPath id="cc"><rect x="0" y="0" width="58" height="58"/></clipPath></defs>
<g transform="translate(782 488)" clip-path="url(#cc)">
<path d="M56.4 -2.5 L63.6 4.5 L37.1 31.7 L29.9 24.7 Z" fill="#202020"/>
<path d="M37.1 31.7 L24.6 37.4 L29.9 24.7 Z" fill="#b8b8b8" stroke="#666" stroke-width="0.7"/>
<path d="M50 6 L55 1" stroke="#fff" stroke-opacity="0.25" stroke-width="2.5"/>
<path d="M24 50 C34 49 46 46 60 40" fill="none" stroke="#222" stroke-width="8.5" stroke-linecap="round"/></g>
<g transform="translate(842 488)" clip-path="url(#cc)">
<path d="M56.4 -2.5 L63.6 4.5 L37.1 31.7 L29.9 24.7 Z" fill="#1a1a1a"/>
<path d="M37.1 31.7 L24.6 37.4 L29.9 24.7 Z" fill="#111" stroke="#666" stroke-width="0.7"/>
<path d="M50 6 L55 1" stroke="#fff" stroke-opacity="0.25" stroke-width="2.5"/>
<path d="M20 43 C22 52 34 53 44 49 C50 47 54 44 60 41" fill="none" stroke="url(#gk)" stroke-width="7.5" stroke-linecap="round"/></g>
<g transform="translate(902 488)" clip-path="url(#cc)">
<path d="M56.4 -2.5 L63.6 4.5 L37.1 31.7 L29.9 24.7 Z" fill="#e8e8e8"/>
<path d="M37.1 31.7 L24.6 37.4 L29.9 24.7 Z" fill="#b8b8b8" stroke="#666" stroke-width="0.7"/>
<path d="M50 6 L55 1" stroke="#fff" stroke-opacity="0.25" stroke-width="2.5"/>
<path d="M30.5 25.5 L36.5 31" stroke="#d07030" stroke-width="1.2"/><path d="M56.4 -2.5 L63.6 4.5 L37.1 31.7 L29.9 24.7 Z" fill="none" stroke="#999" stroke-width="0.7"/><path d="M16 44 C26 36 36 48 46 43 C50 41 54 40 58 40" fill="none" stroke="url(#gk2)" stroke-width="7" stroke-linecap="round" opacity="0.75"/></g>
<g transform="translate(962 488)" clip-path="url(#cc)">
<path d="M56.4 -2.5 L63.6 4.5 L37.1 31.7 L29.9 24.7 Z" fill="#8a8a8a"/>
<path d="M37.1 31.7 L24.6 37.4 L29.9 24.7 Z" fill="#b8b8b8" stroke="#666" stroke-width="0.7"/>
<path d="M50 6 L55 1" stroke="#fff" stroke-opacity="0.25" stroke-width="2.5"/>
<path d="M16 44 C24 38 32 48 42 43 C48 38 54 44 58 42" fill="none" stroke="#8a8a8a" stroke-width="7" stroke-linecap="round" opacity="0.6"/></g>
<g transform="translate(782 548)" clip-path="url(#cc)">
<path d="M60 -2 L44 14" stroke="#555" stroke-width="5"/>
<path d="M46 12 L32 26" stroke="#ddd" stroke-width="5"/>
<path d="M46 12 L32 26" stroke="#888" stroke-width="1" opacity="0.6"/>
<path d="M33 23 C28 26 24 30 19 33 C25 33 32 31 36 27 Z" fill="#3a2018"/>
<path d="M18 40 C22 52 28 44 34 48 C40 52 48 50 58 46" fill="none" stroke="#2a2a2a" stroke-width="6" stroke-linecap="round"/></g>
<g transform="translate(842 548)" clip-path="url(#cc)">
<path d="M60 -2 L44 14" stroke="#e0902a" stroke-width="5"/>
<path d="M46 12 L32 26" stroke="#ddd" stroke-width="5"/>
<path d="M46 12 L32 26" stroke="#888" stroke-width="1" opacity="0.6"/>
<path d="M33 23 C28 26 24 30 19 33 C25 33 32 31 36 27 Z" fill="#5a3828"/>
<path d="M18 40 C22 52 28 44 34 48 C40 52 48 50 58 46" fill="none" stroke="url(#gk)" stroke-width="6" stroke-linecap="round"/></g>
<g transform="translate(902 548)" clip-path="url(#cc)">
<path d="M55 3 L42 16" stroke="#8a5a2a" stroke-width="4"/>
<path d="M43 15 L33 25" stroke="#b8d0e8" stroke-width="3"/>
<path d="M34 24 C31 27 28 30 24 32 C27 30 31 29 36 27 Z" fill="#1e2a50" stroke="#1e2a50" stroke-width="1.5"/>
<path d="M14 47 C19 38 27 36 25 43 C23 50 33 50 40 46 C46 43 52 41 58 38" fill="none" stroke="#1e2a50" stroke-width="1.4"/>
</g>
<g transform="translate(962 548)" clip-path="url(#cc)">
<path d="M52 -6 L64 6 L39 28 L30 20 Z" fill="#2f6cc0"/>
<path d="M39 28 L22 33 L30 20 Z" fill="#d9b890"/>
<path d="M26 31.5 L22 33 L24 29 Z" fill="#333"/>
<path d="M30 50 L58 30 M34 54 L58 36 M40 56 L58 42" stroke="#888" stroke-width="2.5" opacity="0.7"/>
<circle cx="21" cy="39" r="3" fill="#222"/><circle cx="22" cy="44" r="2.5" fill="#333"/><circle cx="25" cy="48" r="2" fill="#555"/>
</g>
</svg>
<!-- status bar -->
<div class="t" style="left:39px;top:643px;font-size:12.6px;color:#cfcfcf">b) Ba...tails</div>
<div class="t" style="left:124px;top:643px;font-size:12px;color:#cfcfcf">RGB/透明...rc.icc</div>
<div class="a" style="left:531px;top:637px;width:147px;height:25px;border:1px solid #5a5a5a;border-radius:2px;background:#434343"></div>
<div class="t" style="left:535px;top:642px;font-size:12.6px;color:#d4d4d4">2,480 <u>x</u> 3,508 (34.6 MiB)</div>
<div class="t" style="left:742px;top:643px;font-size:12px;color:#d4d4d4">0.00°</div>
<div class="t" style="left:852px;top:643px;font-size:12px;color:#d4d4d4">100.0%</div>
<div class="a" style="left:911px;top:647px;width:82px;height:5px;border-radius:3px;background:#333"></div>
<div class="a" style="left:911px;top:647px;width:30px;height:5px;border-radius:3px;background:#6b93bb"></div>
<div class="a" style="left:936px;top:642px;width:13px;height:15px;border-radius:3px;background:#555;border:1px solid #333"></div>
<div class="a" style="left:994px;top:638px;width:23px;height:23px;border-radius:3px;background:#424242;border:1px solid #333"></div>
<svg width="1042" height="666">
<rect x="8.5" y="641.5" width="15" height="15" fill="none" stroke="#d4d4d4" stroke-width="1"/>
<circle cx="16" cy="649" r="4.5" fill="none" stroke="#d4d4d4" stroke-width="1" stroke-dasharray="1.2 1.2"/>
<circle cx="697.2" cy="649" r="11" fill="#333"/>
<path d="M695 649 H708.5" stroke="#e0e0e0" stroke-width="1.2"/>
<circle cx="695.5" cy="649" r="1.3" fill="#e0e0e0"/><circle cx="708" cy="649" r="1.3" fill="#e0e0e0"/>
<path d="M697 638 V659" stroke="#555" stroke-width="0.8" stroke-dasharray="1 1.5"/>
<rect x="999.5" y="643.5" width="12" height="13" fill="none" stroke="#e0e0e0" stroke-width="1.2"/>
<rect x="1003" y="647.5" width="5" height="5" fill="none" stroke="#e0e0e0" stroke-width="1.2"/>
<g fill="#777"><rect x="1036" y="657" width="2" height="2"/><rect x="1033" y="660" width="2" height="2"/><rect x="1036" y="660" width="2" height="2"/><rect x="1030" y="663" width="2" height="2"/><rect x="1033" y="663" width="2" height="2"/><rect x="1036" y="663" width="2" height="2"/></g>
</svg>
</body></html>
